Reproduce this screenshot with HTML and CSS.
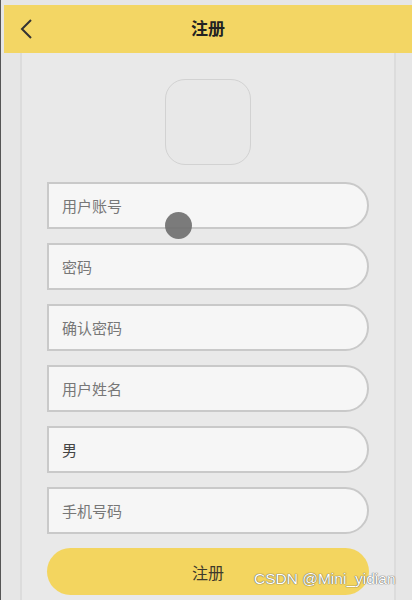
FILE: index.html
```html
<!DOCTYPE html>
<html lang="zh">
<head>
<meta charset="utf-8">
<link rel="stylesheet" href="styles.css">
</head>
<body>
<div class="screen">
  <header class="topbar">
    <svg class="back" width="14" height="22" viewBox="0 0 14 22"><path d="M12 2 L3 11 L12 20" fill="none" stroke="#333" stroke-width="2"/></svg>
    <h1 class="title">注册</h1>
  </header>
  <main class="card">
    <div class="avatar"></div>
    <div class="field">用户账号</div>
    <div class="field">密码</div>
    <div class="field">确认密码</div>
    <div class="field">用户姓名</div>
    <div class="field value">男</div>
    <div class="field">手机号码</div>
    <div class="btn">注册</div>
  </main>
  <div class="touch"></div>
  <div class="watermark">CSDN @Mini_yidian</div>
</div>
</body>
</html>
```
FILE: styles.css
```css
* { box-sizing: border-box; margin: 0; padding: 0; }
html, body { width: 412px; height: 600px; overflow: hidden; }
body {
  background: #e6e6e6;
  font-family: "Noto Sans CJK SC", "Liberation Sans", sans-serif;
}
.screen {
  position: relative;
  width: 412px;
  height: 600px;
  padding-top: 5px;
  border-left: 1px solid #555;
  background: #e6e6e6;
}
.topbar {
  position: relative;
  z-index: 2;
  height: 48px;
  margin-left: 3px;
  background: #f3d664;
  display: flex;
  align-items: center;
  justify-content: center;
}
.back {
  position: absolute;
  left: 15px;
  top: 13px;
}
.title {
  font-size: 17px;
  font-weight: 700;
  color: #222;
  margin-top: -3px;
}
.card {
  margin: 0 16px 0 19px;
  height: 560px;
  background: #e9e9e9;
  border-left: 2px solid #dcdcdc;
  border-right: 2px solid #dcdcdc;
  display: flex;
  flex-direction: column;
  align-items: flex-start;
  padding: 26px 0 0 25px;
  gap: 14px;
}
.avatar {
  width: 86px;
  height: 86px;
  margin-left: 118px;
  margin-bottom: 3px;
  border: 1.5px solid #d2d2d2;
  border-radius: 20px;
  background: #e8e8e8;
}
.field {
  width: 322px;
  height: 47px;
  background: #f6f6f6;
  border: 2px solid #c9c9c9;
  border-radius: 0 24px 24px 0;
  display: flex;
  align-items: center;
  padding-left: 13px;
  font-size: 15px;
  color: #777;
}
.field.value { color: #444; }
.btn {
  width: 322px;
  height: 47px;
  background: #f3d55f;
  border-radius: 24px;
  display: flex;
  align-items: center;
  justify-content: center;
  font-size: 16px;
  color: #3e3a2c;
}
.touch {
  position: absolute;
  left: 164px;
  top: 212px;
  width: 27px;
  height: 27px;
  border-radius: 50%;
  background: rgba(110, 110, 110, 0.9);
}
.watermark {
  position: absolute;
  left: 253px;
  top: 570px;
  font-family: "Liberation Sans", sans-serif;
  font-size: 15.5px;
  color: #fff;
  text-shadow: 0 0 1px #555, 0 0 1px #555;
}
```
